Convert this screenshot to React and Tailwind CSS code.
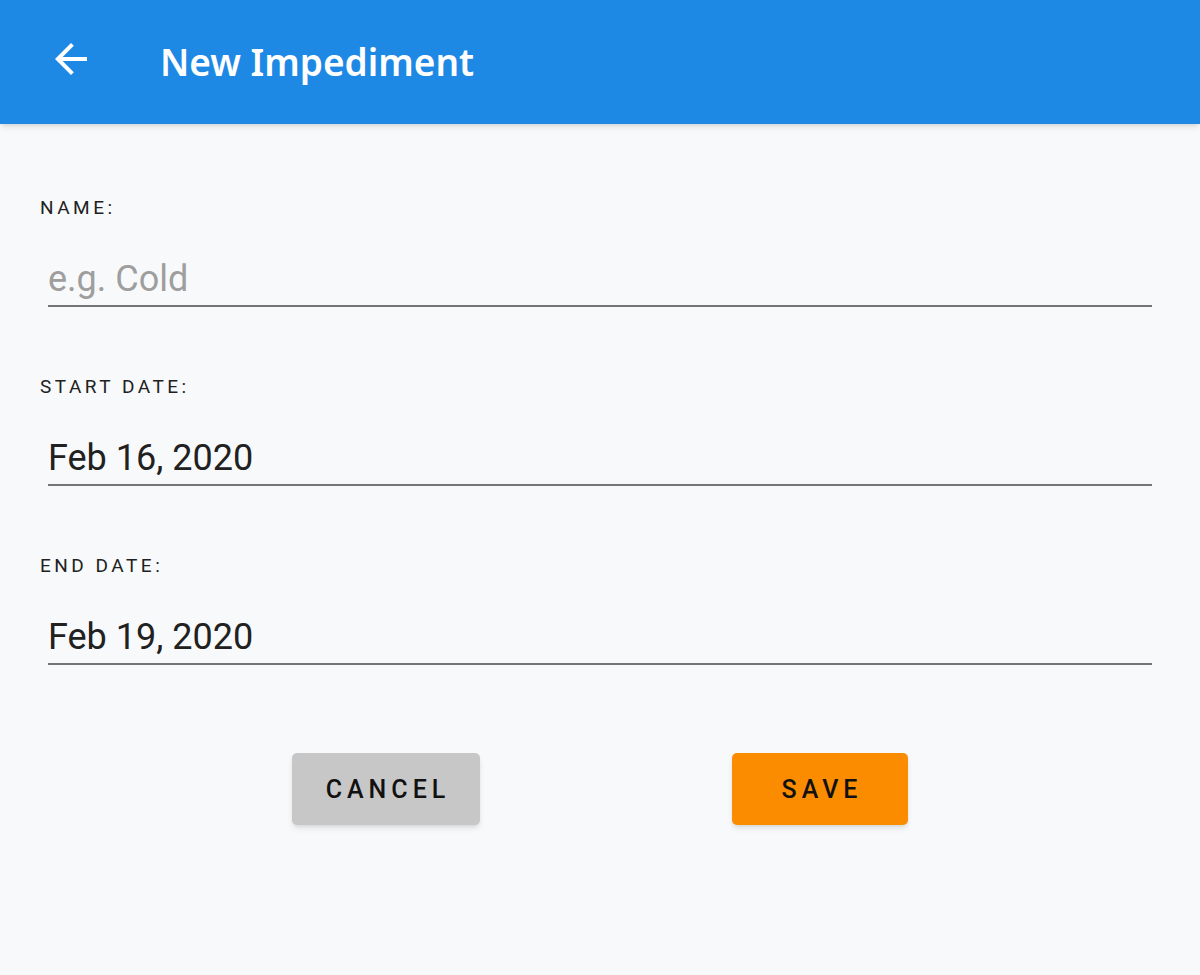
import React, { useState } from "react";

const fields = [
    { id: "name", label: "NAME:", placeholder: "e.g. Cold", value: "" },
    { id: "start", label: "START DATE:", placeholder: "", value: "Feb 16, 2020" },
    { id: "end", label: "END DATE:", placeholder: "", value: "Feb 19, 2020" }
];

function BackArrow() {
    return (
        <svg width="48" height="48" viewBox="0 0 24 24" fill="#ffffff">
            <path d="M20 11H7.83l5.59-5.59L12 4l-8 8 8 8 1.41-1.41L7.83 13H20v-2z" />
        </svg>
    );
}

function Field({ field }) {
    const [value, setValue] = useState(field.value);
    return (
        <div className="flex flex-col">
            <label className="pl-[40px] text-[19px] leading-[24px] tracking-[3.5px] text-[#212121]">
                {field.label}
            </label>
            <input
                value={value}
                onChange={(e) => setValue(e.target.value)}
                placeholder={field.placeholder}
                className="mt-[35px] ml-[48px] mr-[48px] h-[52px] pb-[2px] px-0 bg-transparent border-b-2 border-[#757575] text-[36px] leading-[48px] text-[#212121] placeholder:text-[#9e9e9e] focus:outline-none"
            />
        </div>
    );
}

export default function App() {
    return (
        <div className="min-h-[975px] bg-[#f8f9fb] flex flex-col" style={{ fontFamily: "Roboto, 'Noto Sans', sans-serif" }}>
            <header className="h-[124px] bg-[#1e88e5] flex items-center shadow-md relative z-10">
                <button className="ml-[47px] -mt-[6px] w-[48px] h-[48px] flex items-center justify-center">
                    <BackArrow />
                </button>
                <h1 className="ml-[65px] -mt-[2px] text-[37px] font-semibold text-white leading-none font-['Noto_Sans',sans-serif]">
                    New Impediment
                </h1>
            </header>

            <main className="pt-[72px] flex flex-col gap-[68px]">
                {fields.map((f) => (
                    <Field key={f.id} field={f} />
                ))}
            </main>

            {/* Buttons */}
            <div className="mt-[88px] flex justify-center gap-[252px]">
                <button className="w-[188px] h-[72px] pt-[2px] pl-[4px] rounded-[5px] bg-[#c7c7c8] shadow-md text-[25px] font-medium tracking-[5px] text-[#111]">
                    CANCEL
                </button>
                <button className="w-[176px] h-[72px] pt-[2px] pl-[4px] rounded-[5px] bg-[#fb8c00] shadow-md text-[25px] font-medium tracking-[5px] text-[#111]">
                    SAVE
                </button>
            </div>
        </div>
    );
}
